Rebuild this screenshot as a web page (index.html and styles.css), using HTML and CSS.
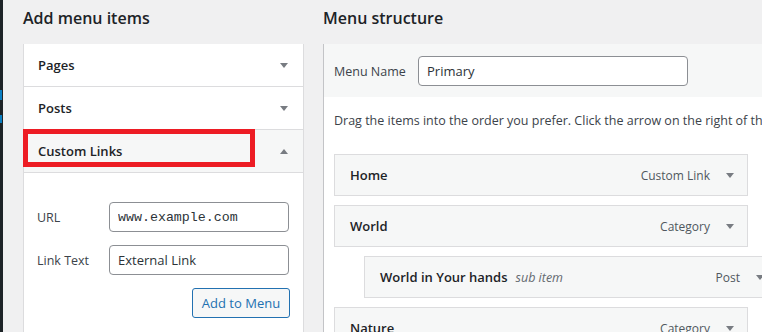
FILE: index.html
```html
<!DOCTYPE html>
<html lang="en">
<head>
<meta charset="utf-8">
<title>Menus</title>
<link rel="stylesheet" href="styles.css">
</head>
<body>
<div class="page">
  <div class="adminbar"><span class="mark m1"></span><span class="mark m2"></span></div>
  <div class="content">
    <div class="col-left">
      <h2 class="heading">Add menu items</h2>
      <div class="accordion">
        <div class="acc-row"><span>Pages</span><i class="arrow"></i></div>
        <div class="acc-row"><span>Posts</span><i class="arrow"></i></div>
        <div class="acc-row open"><span>Custom Links</span><i class="arrow up"></i><span class="highlight"></span></div>
        <div class="acc-body">
          <div class="field url"><label>URL</label><input type="text" value="www.example.com"></div>
          <div class="field"><label>Link Text</label><input type="text" value="External Link"></div>
          <div class="actions"><button class="btn">Add to Menu</button></div>
        </div>
      </div>
    </div>
    <div class="col-right">
      <h2 class="heading">Menu structure</h2>
      <div class="panel">
        <div class="panel-head"><label class="name-label">Menu Name</label><input class="name-input" type="text" value="Primary"></div>
        <div class="panel-body">
          <p class="hint">Drag the items into the order you prefer. Click the arrow on the right of the item to reveal additional configuration options.</p>
          <ul class="menu">
            <li class="item"><span class="title">Home</span><span class="type">Custom Link</span><i class="arrow"></i></li>
            <li class="item"><span class="title">World</span><span class="type">Category</span><i class="arrow"></i></li>
            <li class="item sub"><span class="title">World in Your hands</span><span class="note">sub item</span><span class="type">Post</span><i class="arrow"></i></li>
            <li class="item"><span class="title">Nature</span><span class="type">Category</span><i class="arrow"></i></li>
          </ul>
        </div>
      </div>
    </div>
  </div>
</div>
</body>
</html>
```
FILE: styles.css
```css
html, body {
  margin: 0;
  padding: 0;
}
body {
  background: #f0f0f1;
  font-family: "Open Sans", "Noto Sans", sans-serif;
  color: #3c434a;
  width: 762px;
  height: 332px;
  overflow: hidden;
}
.page {
  display: flex;
  height: 332px;
}
.adminbar {
  width: 3px;
  flex: none;
  background: #1d2327;
  display: flex;
  flex-direction: column;
}
.mark {
  width: 2px;
  background: #0a7ec2;
}
.m1 { margin-top: 90px; height: 10px; }
.m2 { margin-top: 15px; height: 8px; }
.content {
  display: flex;
  padding-left: 20px;
  gap: 19px;
  flex: 1;
  min-width: 0;
}
.col-left {
  width: 281px;
  flex: none;
}
.col-right {
  width: 460px;
  flex: none;
}
.heading {
  font-size: 16px;
  font-weight: 600;
  color: #1d2327;
  line-height: 24px;
  margin: 6px 0 14px;
}
.accordion {
  background: #fff;
  border-left: 1px solid #dcdcde;
  border-right: 1px solid #dcdcde;
  height: 288px;
}
.acc-row {
  position: relative;
  height: 42px;
  border-bottom: 1px solid #dcdcde;
  display: flex;
  align-items: center;
  justify-content: space-between;
  padding: 0 15px 0 14px;
  font-size: 13px;
  font-weight: 600;
  color: #1d2327;
}
.acc-row.open {
  background: #f6f7f7;
}
.arrow {
  display: block;
  width: 0;
  height: 0;
  border-left: 4px solid transparent;
  border-right: 4px solid transparent;
  border-top: 5px solid #787c82;
}
.arrow.up {
  border-top: 0;
  border-bottom: 5px solid #787c82;
}
.highlight {
  position: absolute;
  left: -1px;
  top: -1px;
  width: 232px;
  height: 38px;
  box-sizing: border-box;
  border: 5px solid #ed1c24;
}
.acc-body {
  padding: 29px 13px 0;
}
.field {
  display: flex;
  align-items: center;
  margin-bottom: 13px;
}
.field label {
  width: 72px;
  font-size: 12.5px;
  color: #3c434a;
}
.field input, .name-input {
  box-sizing: border-box;
  height: 30px;
  border: 1px solid #8c8f94;
  border-radius: 4px;
  padding: 0 8px;
  font-family: "Open Sans", "Noto Sans", sans-serif;
  font-size: 13px;
  color: #2c3338;
  background: #fff;
  outline: none;
}
.field input {
  width: 180px;
}
.field.url input {
  font-family: "Liberation Mono", "DejaVu Sans Mono", monospace;
  font-size: 13.3px;
}
.actions {
  display: flex;
  justify-content: flex-end;
}
.btn {
  height: 30px;
  width: 98px;
  padding: 0;
  border: 1px solid #2271b1;
  border-radius: 3px;
  background: #f6f7f7;
  color: #2271b1;
  font-family: "Open Sans", "Noto Sans", sans-serif;
  font-size: 13px;
}
.panel {
  border-left: 1px solid #c3c4c7;
  background: #fff;
  height: 288px;
}
.panel-head {
  background: #f6f7f7;
  height: 53px;
  box-sizing: border-box;
  padding: 12px 10px 11px;
  display: flex;
  align-items: center;
}
.name-label {
  width: 84px;
  font-size: 12.5px;
  color: #3c434a;
}
.name-input {
  width: 270px;
}
.panel-body {
  padding: 0 10px;
}
.hint {
  margin: 14px 0 23px;
  font-size: 12.5px;
  line-height: 20px;
  white-space: nowrap;
}
.menu {
  list-style: none;
  margin: 0;
  padding: 0;
}
.item {
  box-sizing: border-box;
  width: 414px;
  height: 42px;
  border: 1px solid #dcdcde;
  background: #f6f7f7;
  display: flex;
  align-items: center;
  padding: 0 13px 0 15px;
  margin-bottom: 9px;
}
.item.sub {
  margin-left: 30px;
}
.title {
  font-size: 13px;
  font-weight: 600;
  color: #1d2327;
}
.note {
  font-style: italic;
  font-size: 12.5px;
  color: #646970;
  margin-left: 8px;
}
.type {
  margin-left: auto;
  margin-right: 16px;
  font-size: 12px;
  color: #50575e;
}
```
